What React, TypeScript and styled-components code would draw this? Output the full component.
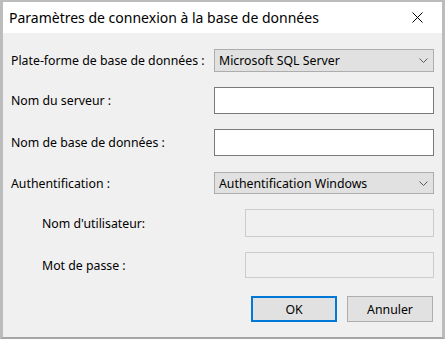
import styled, { createGlobalStyle } from "styled-components";

const Global = createGlobalStyle`
    html, body {
        margin: 0;
        padding: 0;
        background: #bdbdbd;
    }
    #root {
        width: 445px;
        height: 339px;
    }
`

const Window = styled.div`
    box-sizing: border-box;
    width: 445px;
    height: 339px;
    border-style: solid;
    border-color: #bcbcbc;
    border-width: 2px 3px 2px 3px;
    border-bottom-color: #a6a6a6;
    background: #f0f0f0;
    display: flex;
    flex-direction: column;
    font-family: "Segoe UI", "Noto Sans", sans-serif;
    color: #000;
`

const TitleBar = styled.div`
    height: 31px;
    background: #fff;
    display: flex;
    align-items: center;
    justify-content: space-between;
    padding-left: 6px;
`

const Title = styled.span`
    font-size: 14px;
`

const Close = styled.div`
    width: 46px;
    height: 31px;
    display: flex;
    align-items: center;
    justify-content: center;
    margin-right: 2px;
`

const Body = styled.div`
    flex: 1;
    padding: 16px 8px 0 8px;
    display: flex;
    flex-direction: column;
`

const Row = styled.div<{ $gap: number; $indent?: boolean; $h: number }>`
    display: flex;
    align-items: center;
    margin-top: ${p => p.$gap}px;
    height: ${p => p.$h}px;
    padding-left: ${p => (p.$indent ? 31 : 0)}px;
`

const Label = styled.label<{ $w: number }>`
    width: ${p => p.$w}px;
    flex-shrink: 0;
    font-size: 12.3px;
    white-space: nowrap;
`

const Combo = styled.div`
    box-sizing: border-box;
    width: 220px;
    height: 100%;
    background: #e1e1e1;
    border: 1px solid #adadad;
    display: flex;
    align-items: center;
    justify-content: space-between;
    padding: 0 5px 0 4px;
    font-size: 12.3px;
`

const TextBox = styled.input`
    box-sizing: border-box;
    width: 220px;
    height: 100%;
    margin: 0;
    background: #fff;
    border: 1px solid #7a7a7a;
    outline: none;
    font: inherit;
`

const DisabledBox = styled.input`
    box-sizing: border-box;
    width: 190px;
    height: 100%;
    margin: 0;
    background: #f0f0f0;
    border: 1px solid #cccccc;
    outline: none;
`

const Buttons = styled.div`
    display: flex;
    justify-content: flex-end;
    gap: 10px;
    margin-top: 18px;
    padding-right: 1px;
`

const Button = styled.button<{ $primary?: boolean }>`
    box-sizing: border-box;
    width: 86px;
    height: 26px;
    background: #e1e1e1;
    border: ${p => (p.$primary ? "2px solid #0078d7" : "1px solid #adadad")};
    font-family: inherit;
    font-size: 12.3px;
    color: #000;
    padding: 0;
`

const Chevron = () => (
    <svg width="9" height="5" viewBox="0 0 9 5">
        <path d="M0.5 0.5 L4.5 4.5 L8.5 0.5" fill="none" stroke="#5a5a5a" strokeWidth="1" />
    </svg>
)

const App = (): JSX.Element => {
    return (
        <>
            <Global />
            <Window>
                <TitleBar>
                    <Title>Paramètres de connexion à la base de données</Title>
                    <Close>
                        <svg width="11" height="11" viewBox="0 0 11 11">
                            <path d="M0.5 0.5 L10.5 10.5 M10.5 0.5 L0.5 10.5" stroke="#000" strokeWidth="1" />
                        </svg>
                    </Close>
                </TitleBar>
                <Body>
                    <Row $gap={0} $h={23}>
                        <Label $w={203}>Plate-forme de base de données :</Label>
                        <Combo>
                            Microsoft SQL Server
                            <Chevron />
                        </Combo>
                    </Row>
                    <Row $gap={15} $h={27}>
                        <Label $w={203}>Nom du serveur :</Label>
                        <TextBox />
                    </Row>
                    <Row $gap={15} $h={27}>
                        <Label $w={203}>Nom de base de données :</Label>
                        <TextBox />
                    </Row>
                    <Row $gap={16} $h={22}>
                        <Label $w={203}>Authentification :</Label>
                        <Combo>
                            Authentification Windows
                            <Chevron />
                        </Combo>
                    </Row>
                    <Row $gap={15} $h={28} $indent>
                        <Label $w={203}>Nom d'utilisateur:</Label>
                        <DisabledBox disabled />
                    </Row>
                    <Row $gap={15} $h={26} $indent>
                        <Label $w={203}>Mot de passe :</Label>
                        <DisabledBox disabled />
                    </Row>
                    <Buttons>
                        <Button $primary>OK</Button>
                        <Button>Annuler</Button>
                    </Buttons>
                </Body>
            </Window>
        </>
    )
}

export default App;
